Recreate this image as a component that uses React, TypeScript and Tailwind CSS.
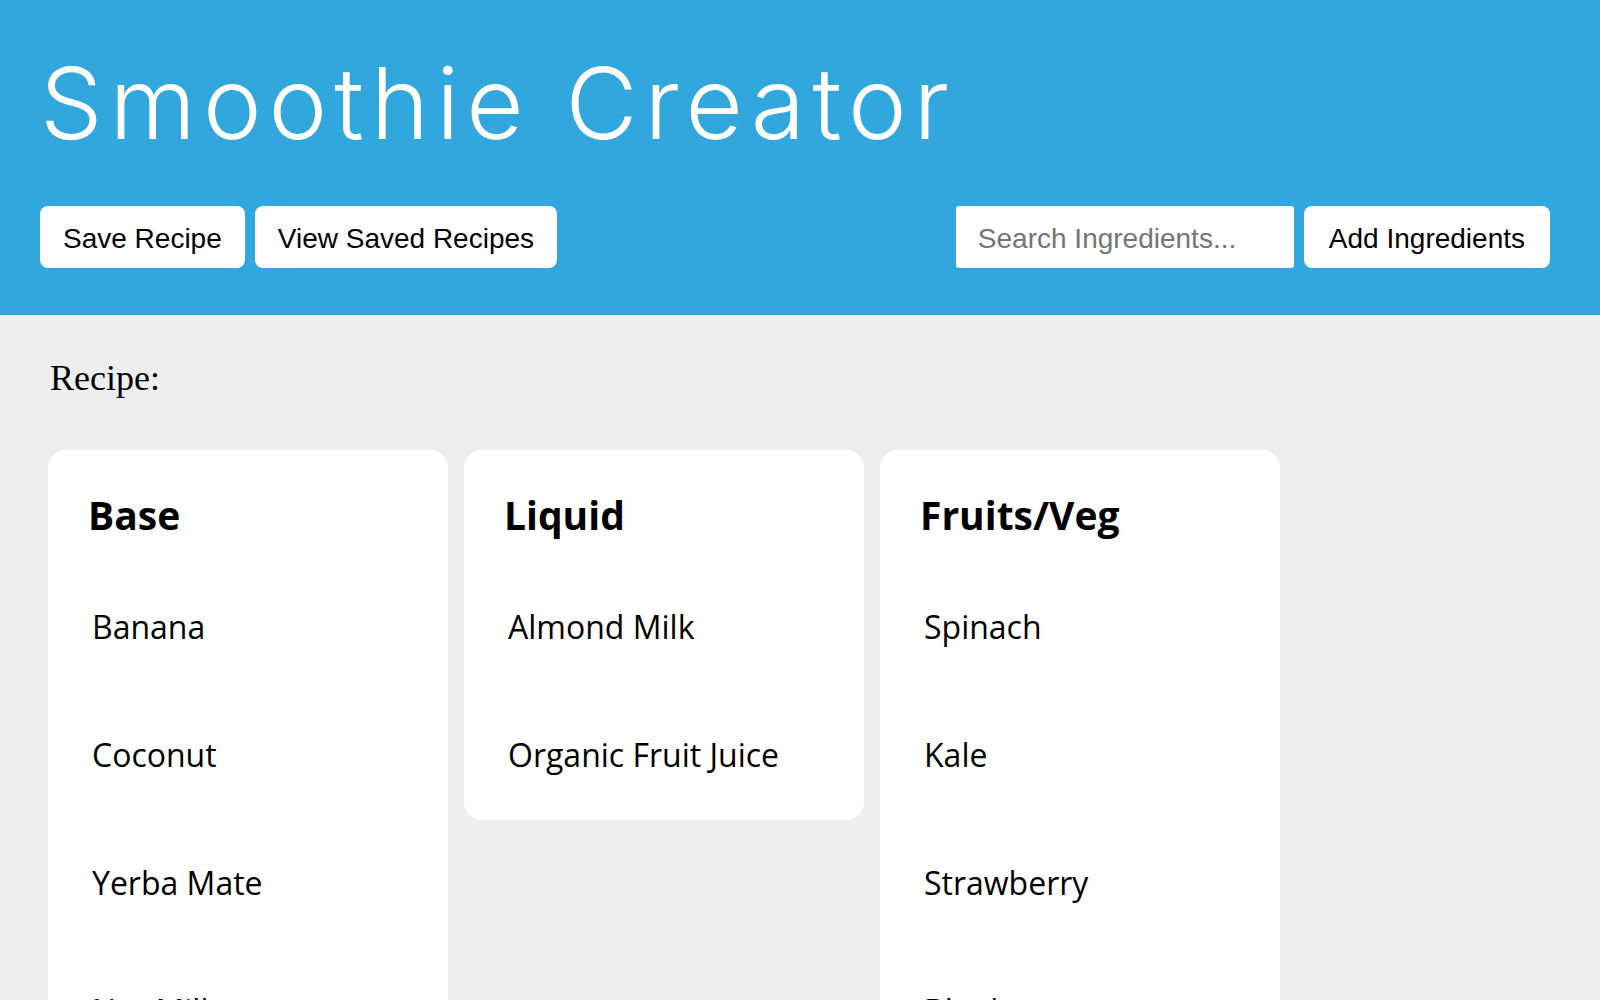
import React from "react";

const columns = [
  { title: "Base", items: ["Banana", "Coconut", "Yerba Mate", "Nut Milk", "Greek Yogurt"] },
  { title: "Liquid", items: ["Almond Milk", "Organic Fruit Juice"] },
  { title: "Fruits/Veg", items: ["Spinach", "Kale", "Strawberry", "Blueberry", "Mango"] },
];

function Card({ title, items }: { title: string; items: string[] }) {
  return (
    <div className="w-[400px] shrink-0 rounded-[18px] bg-white pt-[38px] pb-[1px] pl-[40px]">
      <h2 className="text-[39px] leading-[53px] font-bold text-black [font-family:'Open_Sans',sans-serif]">
        {title}
      </h2>
      <ul className="mt-[22px] pl-[4px]">
        {items.map((it) => (
          <li
            key={it}
            className="h-[128px] text-[32px] leading-[128px] text-black [font-family:'Open_Sans',sans-serif]"
          >
            {it}
          </li>
        ))}
      </ul>
    </div>
  );
}

export default function App() {
  return (
    <div className="min-h-screen bg-[#eeeeee]">
      <header className="flex h-[315px] flex-col bg-[#31a7dd] px-[40px]">
        <h1 className="pt-[54px] text-[99px] leading-none font-light tracking-[7px] text-white [font-family:'Inter',sans-serif]">
          Smoothie Creator
        </h1>
        <div className="mt-[53px] flex items-center justify-between pr-[10px] [font-family:'Liberation_Sans',Arial,sans-serif]">
          <div className="flex gap-[10px]">
            <button className="flex h-[62px] items-center rounded-[8px] bg-white px-[23px] pt-[3px] text-[28px] text-black">
              Save Recipe
            </button>
            <button className="flex h-[62px] items-center rounded-[8px] bg-white px-[23px] pt-[3px] text-[28px] text-black">
              View Saved Recipes
            </button>
          </div>
          <div className="flex gap-[10px]">
            <input
              placeholder="Search Ingredients..."
              className="h-[62px] w-[338px] rounded-[3px] bg-white pl-[22px] pt-[3px] text-[28px] text-black outline-none placeholder:text-[#757575]"
            />
            <button className="flex h-[62px] items-center rounded-[8px] bg-white px-[25px] pt-[3px] text-[28px] text-black">
              Add Ingredients
            </button>
          </div>
        </div>
      </header>
      <main className="pt-[45px]">
        <div className="pl-[50px] text-[36px] leading-none text-black [font-family:'Liberation_Serif',serif]">
          Recipe:
        </div>
        <div className="mt-[54px] flex items-start gap-[16px] pl-[48px]">
          {columns.map((c) => (
            <Card key={c.title} title={c.title} items={c.items} />
          ))}
        </div>
      </main>
    </div>
  );
}
